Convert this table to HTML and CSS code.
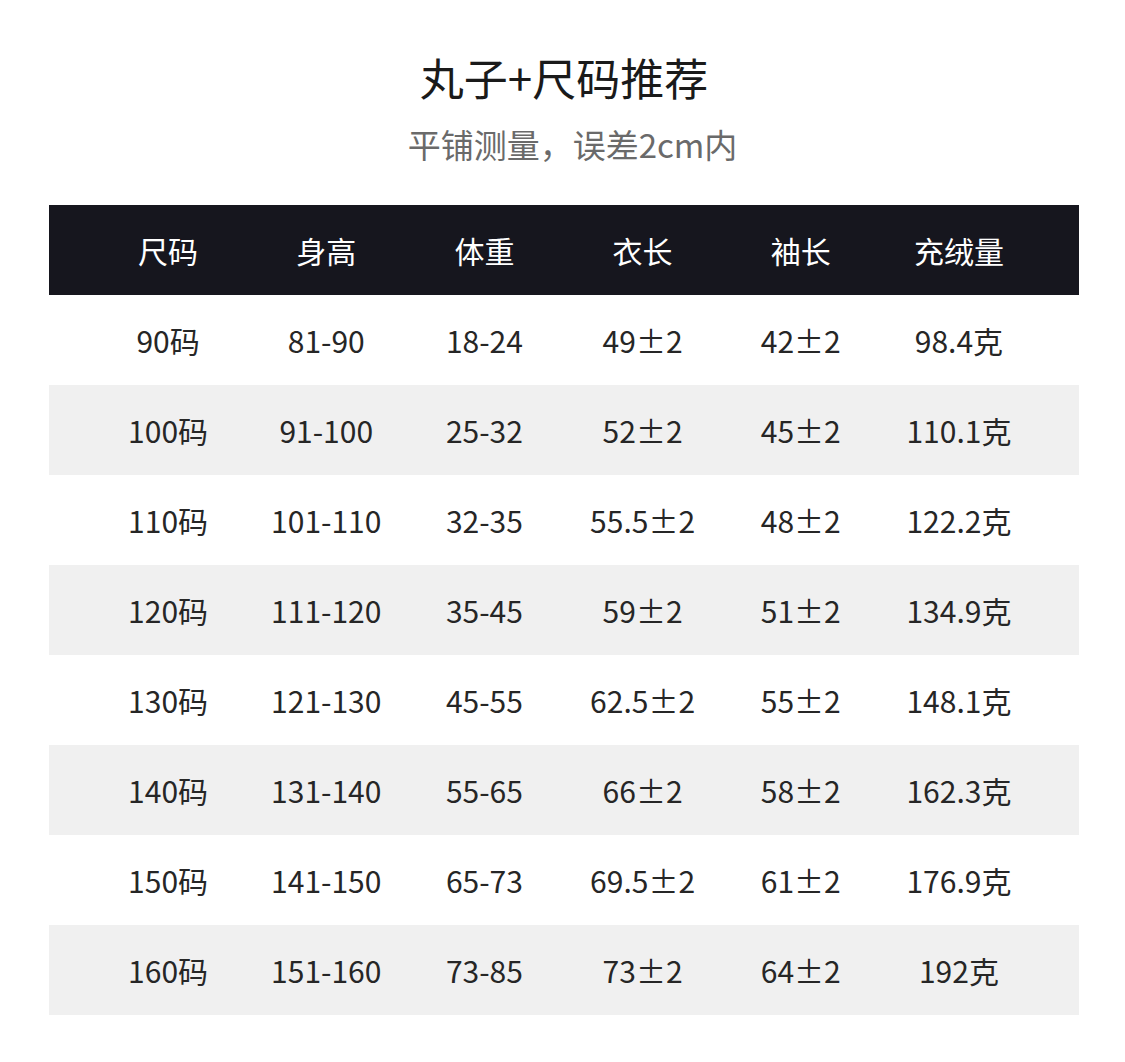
FILE: index.html
```html
<!DOCTYPE html>
<html lang="zh">
<head>
<meta charset="utf-8">
<link rel="stylesheet" href="styles.css">
</head>
<body>
<div class="page">
  <h1 class="title">丸子+尺码推荐</h1>
  <p class="subtitle">平铺测量，误差2cm内</p>
  <div class="table">
    <div class="row head">
      <div>尺码</div><div>身高</div><div>体重</div><div>衣长</div><div>袖长</div><div>充绒量</div>
    </div>
    <div class="row"><div>90码</div><div>81-90</div><div>18-24</div><div>49±2</div><div>42±2</div><div>98.4克</div></div>
    <div class="row alt"><div>100码</div><div>91-100</div><div>25-32</div><div>52±2</div><div>45±2</div><div>110.1克</div></div>
    <div class="row"><div>110码</div><div>101-110</div><div>32-35</div><div>55.5±2</div><div>48±2</div><div>122.2克</div></div>
    <div class="row alt"><div>120码</div><div>111-120</div><div>35-45</div><div>59±2</div><div>51±2</div><div>134.9克</div></div>
    <div class="row"><div>130码</div><div>121-130</div><div>45-55</div><div>62.5±2</div><div>55±2</div><div>148.1克</div></div>
    <div class="row alt"><div>140码</div><div>131-140</div><div>55-65</div><div>66±2</div><div>58±2</div><div>162.3克</div></div>
    <div class="row"><div>150码</div><div>141-150</div><div>65-73</div><div>69.5±2</div><div>61±2</div><div>176.9克</div></div>
    <div class="row alt"><div>160码</div><div>151-160</div><div>73-85</div><div>73±2</div><div>64±2</div><div>192克</div></div>
  </div>
</div>
</body>
</html>
```
FILE: styles.css
```css
html, body {
  margin: 0;
  padding: 0;
  background: #ffffff;
}
body {
  font-family: "Noto Sans CJK SC", "Noto Sans", sans-serif;
  color: #222222;
}
.page {
  width: 1125px;
  padding-top: 47px;
}
.title {
  margin: 0;
  text-align: center;
  font-size: 44px;
  line-height: 60px;
  font-weight: 400;
  color: #1a1a1a;
  padding-left: 3px;
}
.subtitle {
  margin: 17px 0 0;
  text-align: center;
  font-size: 33px;
  line-height: 40px;
  font-weight: 400;
  color: #6a6a6a;
  padding-left: 20px;
}
.table {
  margin: 41px 0 0 49px;
  width: 1030px;
}
.row {
  display: grid;
  grid-template-columns: repeat(6, 1fr);
  padding: 0 41px 0 40px;
  height: 90px;
  align-items: center;
  text-align: center;
  font-size: 30px;
  line-height: 40px;
  font-weight: 400;
  color: #262626;
}
.row.alt {
  background: #f0f0f0;
}
.row.head {
  background: #16161e;
  color: #ffffff;
}
```
